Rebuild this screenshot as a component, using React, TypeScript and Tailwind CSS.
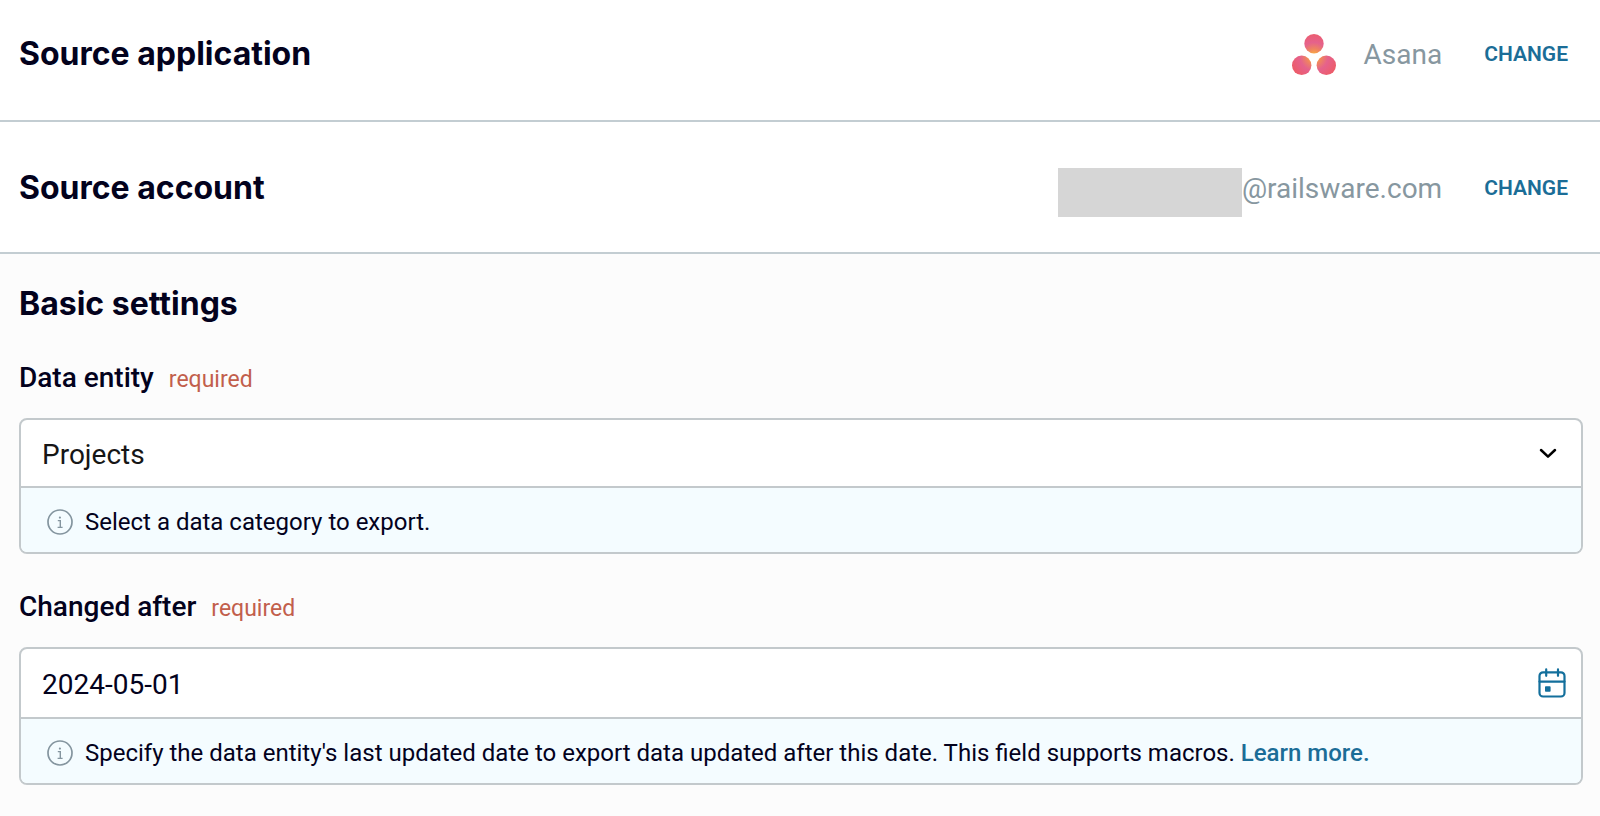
import { useState } from "react";
import type { ReactNode } from "react";

const AsanaLogo = () => (
  <svg width="44" height="41" viewBox="0 0 44 41" aria-hidden="true">
    <defs>
      <radialGradient
        id="asana"
        gradientUnits="userSpaceOnUse"
        cx="22"
        cy="22.5"
        r="27"
      >
        <stop offset="0" stopColor="#ffb900" />
        <stop offset="0.12" stopColor="#f9a648" />
        <stop offset="0.28" stopColor="#ef8460" />
        <stop offset="0.52" stopColor="#e5628c" />
        <stop offset="0.7" stopColor="#e95f7c" />
        <stop offset="1" stopColor="#ee5a5f" />
      </radialGradient>
    </defs>
    <g fill="url(#asana)">
      <circle cx="22" cy="9.7" r="9.7" />
      <circle cx="9.7" cy="31.3" r="9.7" />
      <circle cx="34.3" cy="31.3" r="9.7" />
    </g>
  </svg>
);

const InfoIcon = () => (
  <svg
    width="26"
    height="26"
    viewBox="0 0 26 26"
    fill="none"
    stroke="#84959f"
    strokeWidth="1.7"
    className="shrink-0"
    aria-hidden="true"
  >
    <circle cx="13" cy="13" r="12" />
    <path d="M10.8 11.6h2.5v6.8M10.6 18.4h5" strokeWidth="1.4" />
    <circle cx="12.9" cy="8.6" r="1.1" fill="#84959f" stroke="none" />
  </svg>
);

const ChevronIcon = () => (
  <svg
    width="18"
    height="11"
    viewBox="0 0 18 11"
    fill="none"
    stroke="#000"
    strokeWidth="2.5"
    strokeLinecap="round"
    strokeLinejoin="round"
    aria-hidden="true"
  >
    <path d="M2 2l7 6.7L16 2" />
  </svg>
);

const CalendarIcon = () => (
  <svg
    width="28"
    height="30"
    viewBox="0 0 28 30"
    fill="none"
    stroke="#136f9c"
    strokeWidth="2.2"
    strokeLinecap="round"
    aria-hidden="true"
  >
    <rect x="1.5" y="4.3" width="25" height="24.2" rx="3.6" />
    <path d="M1.5 13.6h25M8.2 1.4v6.4M20 1.4v6.4" />
    <rect x="7" y="18.2" width="5.6" height="5.6" rx="0.8" fill="#136f9c" stroke="none" />
  </svg>
);

const SourceRow = ({
  title,
  className,
  children,
}: {
  title: string;
  className: string;
  children: ReactNode;
}) => (
  <section
    className={`flex items-start border-b-2 border-[#c3cdd2] bg-white pl-[19px] pr-8 ${className}`}
  >
    <h2 className="mr-auto font-['Inter',sans-serif] text-[32px] font-bold leading-10">
      {title}
    </h2>
    {children}
    <button
      type="button"
      className="ml-[42px] cursor-pointer text-[21px] font-semibold leading-10 text-[#1b6d97]"
    >
      CHANGE
    </button>
  </section>
);

const Field = ({
  id,
  label,
  hint,
  className,
  children,
}: {
  id: string;
  label: string;
  hint: ReactNode;
  className: string;
  children: ReactNode;
}) => (
  <div className={className}>
    <div className="flex items-baseline gap-[15px]">
      <label htmlFor={id} className="text-[28px] font-medium leading-9">
        {label}
      </label>
      <span className="text-[23px] leading-9 text-[#c25f4c]">required</span>
    </div>
    <div className="mt-5 overflow-hidden rounded-lg border-2 border-[#c3c9cc] bg-white">
      {children}
      <div className="flex h-[66px] items-center gap-3 border-t-2 border-[#c3c9cc] bg-[#f4fcff] pt-[3px] pl-[26px] pr-4">
        <InfoIcon />
        <p id={`${id}-hint`} className="text-[24px] leading-8">
          {hint}
        </p>
      </div>
    </div>
  </div>
);

function App() {
  const [entity, setEntity] = useState("Projects");
  const [changedAfter, setChangedAfter] = useState("2024-05-01");

  return (
    <main className="min-h-screen bg-[#fcfcfc] font-['Roboto',sans-serif] text-[#03021d]">
      {/* Source */}
      <SourceRow title="Source application" className="pt-[34px] pb-11">
        <AsanaLogo />
        <span className="ml-7 text-[28px] leading-[42px] text-[#8797a0]">
          Asana
        </span>
      </SourceRow>
      <SourceRow title="Source account" className="pt-[46px] pb-[35px]">
        <span className="h-[49px] w-[184px] bg-[#d6d6d6]" />
        <span className="text-[28px] leading-[42px] text-[#8797a0]">
          @railsware.com
        </span>
      </SourceRow>

      {/* Settings */}
      <section className="pt-[30px] pb-8 pl-[19px] pr-[17px]">
        <h2 className="font-['Inter',sans-serif] text-[32px] font-bold leading-10">
          Basic settings
        </h2>

        <Field
          id="entity"
          label="Data entity"
          className="mt-9"
          hint="Select a data category to export."
        >
          <div className="relative">
            <select
              id="entity"
              aria-describedby="entity-hint"
              value={entity}
              onChange={(e) => setEntity(e.target.value)}
              className="block h-[66px] w-full appearance-none bg-transparent px-[21px] pt-[3px] text-[28px] text-[#161616]"
            >
              <option>Projects</option>
              <option>Tasks</option>
              <option>Users</option>
            </select>
            <span className="pointer-events-none absolute inset-y-0 right-6 flex items-center">
              <ChevronIcon />
            </span>
          </div>
        </Field>

        <Field
          id="changed"
          label="Changed after"
          className="mt-[35px]"
          hint={
            <>
              Specify the data entity's last updated date to export data updated
              after this date. This field supports macros.{" "}
              <a href="#macros" className="font-medium text-[#1b6d97]">
                Learn more.
              </a>
            </>
          }
        >
          <div className="flex items-center pr-[15px]">
            <input
              id="changed"
              type="text"
              aria-describedby="changed-hint"
              value={changedAfter}
              onChange={(e) => setChangedAfter(e.target.value)}
              className="h-[68px] min-w-0 flex-1 bg-transparent px-[21px] pt-[3px] text-[28px]"
            />
            <button type="button" aria-label="Open calendar" className="cursor-pointer">
              <CalendarIcon />
            </button>
          </div>
        </Field>
      </section>
    </main>
  );
}

export default App;
